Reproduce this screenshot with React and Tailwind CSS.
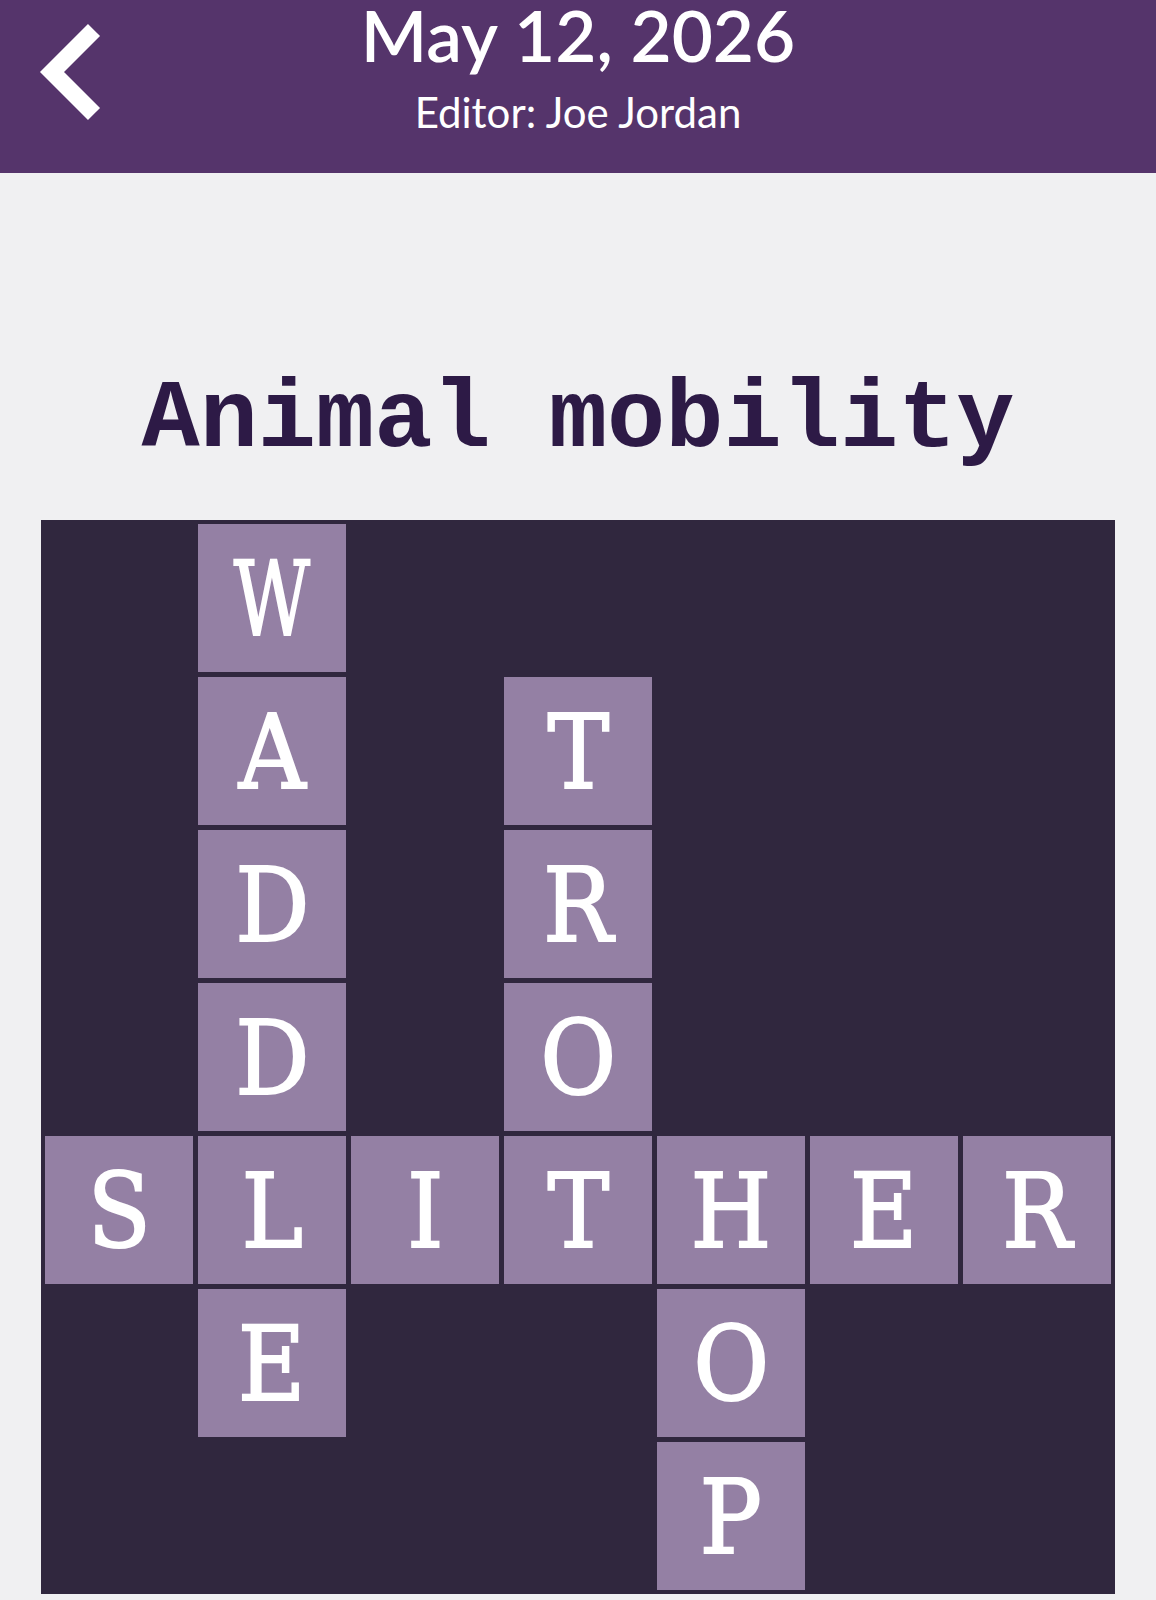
const rows = [
  "-W-----",
  "-A-T---",
  "-D-R---",
  "-D-O---",
  "SLITHER",
  "-E--O--",
  "----P--",
];

// narrow the serif capitals toward a typewriter width
const tileWidth = { W: "scale-x-[0.72]" };

function BackChevron() {
  return (
    <svg width="120" height="140" viewBox="0 0 120 140" className="block">
      <polyline
        points="94,30 52,72 94,114"
        fill="none"
        stroke="white"
        strokeWidth="17"
        strokeLinecap="butt"
        strokeLinejoin="miter"
      />
    </svg>
  );
}

export default function App() {
  return (
    <div className="min-h-[1600px] bg-[#f0f0f2]">
      {/* Top bar */}
      <header className="grid h-[173px] grid-cols-[1fr_auto_1fr] bg-[#55346b] text-white">
        <div className="flex items-start">
          <BackChevron />
        </div>
        <div className="flex flex-col items-center font-['Lato',sans-serif]">
          <h1 className="text-[71px] font-semibold leading-[70px]">May 12, 2026</h1>
          <p className="mt-[21px] text-[42px] leading-[42px]">Editor: Joe Jordan</p>
        </div>
        <div />
      </header>

      <h2 className="mt-[199px] text-center font-['Liberation_Mono',monospace] text-[97px] font-bold leading-none text-[#2d1a46]">
        Animal mobility
      </h2>

      {/* Puzzle board */}
      <div className="mx-[41px] mt-[51px] grid grid-cols-7 gap-[5px] bg-[#30273e] p-[4px]">
        {rows.flatMap((row, r) =>
          row.split("").map((ch, c) =>
            ch === "-" ? (
              <div key={`${r}-${c}`} className="h-[148px]" />
            ) : (
              <div
                key={`${r}-${c}`}
                className="flex h-[148px] items-center justify-center bg-[#9480a4] pt-[3px] font-['DejaVu_Serif',serif] text-[103px] leading-none text-white [-webkit-text-stroke:2px_white]"
              >
                <span className={`inline-block ${tileWidth[ch] || "scale-x-[0.9]"}`}>{ch}</span>
              </div>
            )
          )
        )}
      </div>
    </div>
  );
}
